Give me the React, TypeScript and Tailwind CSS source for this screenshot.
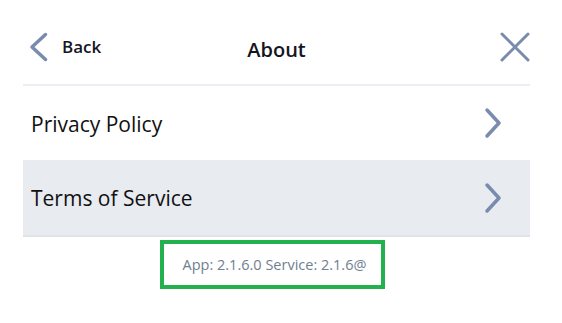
const font = { fontFamily: '"Open Sans", "Liberation Sans", sans-serif' }

export default function App() {
  return (
    <div className="w-[562px] h-[323px] bg-white px-[23px]" style={font}>
      <div className="w-[507px]">
        <div className="h-[86px] pt-[10px] flex items-center border-b-2 border-[#eceef3] relative">
          <svg width="20" height="30" viewBox="0 0 20 30" className="ml-[5px]">
            <path d="M17.5 2.5 L4 15 L17.5 27.5" fill="none" stroke="#7a8cad" strokeWidth="3.5" strokeLinecap="round" strokeLinejoin="round" />
          </svg>
          <span className="ml-[14px] text-[17px] font-semibold text-[#15151f]">Back</span>
          <span className="absolute left-0 right-0 pt-[6px] text-center text-[20px] font-semibold text-[#15151f] pointer-events-none">About</span>
          <svg width="30" height="30" viewBox="0 0 30 30" className="ml-auto mr-[0px]">
            <path d="M2 2 L28 28 M28 2 L2 28" fill="none" stroke="#7a8cad" strokeWidth="3" strokeLinecap="round" />
          </svg>
        </div>
        <Row label="Privacy Policy" />
        <Row label="Terms of Service" shaded />
        <div className="flex pt-[3px]">
          <div className="ml-[137px] w-[225px] h-[49px] border-4 border-[#22b14c] flex items-center justify-center pl-[4px]">
            <span className="text-[14.5px] text-[#6f8090]">App: 2.1.6.0 Service: 2.1.6@</span>
          </div>
        </div>
      </div>
    </div>
  )
}

function Row({ label, shaded }: { label: string; shaded?: boolean }) {
  return (
    <div className={`flex items-center pl-[8px] ${shaded ? 'h-[77px] bg-[#e8ebf0] border-b-2 border-[#dfe2e8]' : 'h-[74px]'}`}>
      <span className="pt-[3px] text-[21px] text-[#111]">{label}</span>
      <svg width="20" height="32" viewBox="0 0 20 32" className="ml-auto mr-[27px]">
        <path d="M4 3 L16 16 L4 29" fill="none" stroke="#7a8cad" strokeWidth="3.5" strokeLinecap="round" strokeLinejoin="round" />
      </svg>
    </div>
  )
}
